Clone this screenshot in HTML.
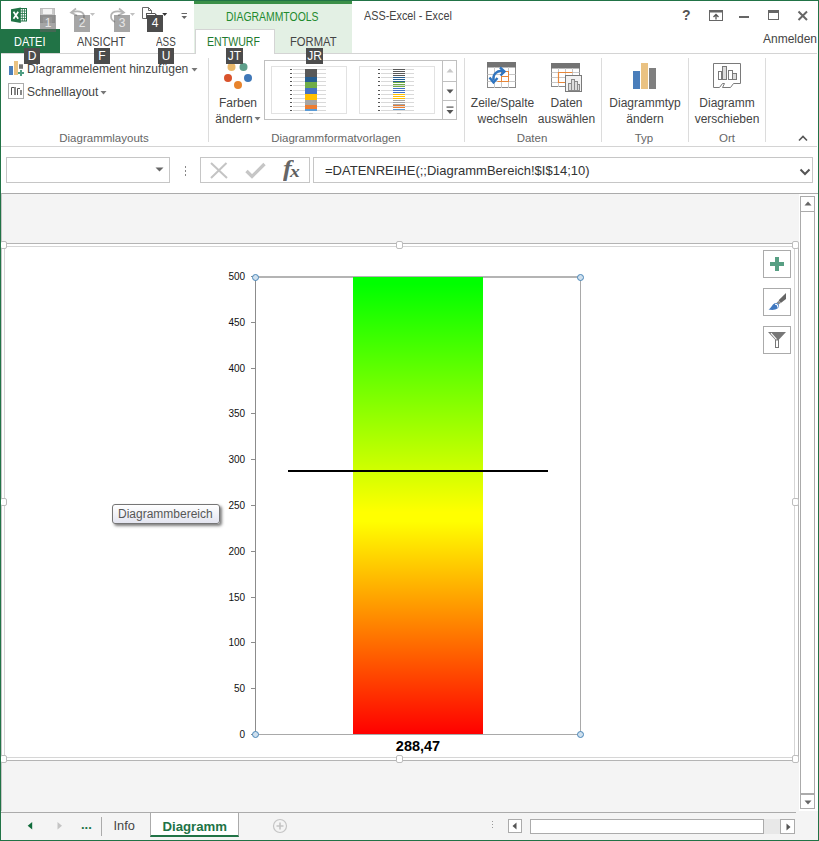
<!DOCTYPE html>
<html><head><meta charset="utf-8">
<style>
*{box-sizing:border-box;margin:0;padding:0}
html,body{width:819px;height:841px;overflow:hidden;background:#fff}
body{font-family:"Liberation Sans",sans-serif;font-size:12px;color:#444;position:relative}
.abs{position:absolute}
.t{position:absolute;white-space:nowrap;line-height:1}
#frame{position:absolute;left:0;top:0;width:819px;height:841px;border:1px solid #217346;pointer-events:none;z-index:50}
/* title */
#ctxband{left:194px;top:1px;width:158px;height:52px;background:#e3f0e4;border-top:3px solid #3b9048}
#datei{left:1px;top:29px;width:59px;height:25px;background:#217346}
#seltab{left:195px;top:29px;width:80px;height:25px;background:#fff;border:1px solid #d4d4d4;border-bottom:none}
#ribline{left:1px;top:53px;width:816px;height:1px;background:#d4d4d4}
#ribbottom{left:1px;top:146px;width:816px;height:1px;background:#d4d4d4}
.kt{position:absolute;background:#4c4c4c;color:#fff;font-size:12px;line-height:16px;height:16px;text-align:center}
.kt.dim{background:rgba(96,96,96,.56);color:#e6e6e6}
.sep{position:absolute;width:1px;background:#dcdcdc;top:58px;height:84px}
.grp{position:absolute;top:133px;font-size:11.500px;color:#666;line-height:1;white-space:nowrap;transform:translateX(-50%)}
.lbl{position:absolute;font-size:12px;color:#444;line-height:16px;text-align:center;white-space:nowrap;transform:translateX(-50%)}
/* sheet */
#sheetbg{left:1px;top:193px;width:817px;height:620px;background:#f4f4f4;border-top:1px solid #ababab;border-left:1px solid #c6c6c6}

.hd{width:7px;height:8px;border:1px solid #bdbdbd;border-radius:2px;background:#fff}
.cir{width:7px;height:7px;border:1px solid #4a86b8;border-radius:50%;background:#cfe0ee}
.cb{width:28px;height:28px;border:1px solid #ababab;background:#fff}
.tk{position:absolute;left:251px;width:4px;height:1px;background:#8c8c8c}
.yl{position:absolute;left:200px;width:45px;text-align:right;font-size:10px;letter-spacing:-0.100px;color:#111;line-height:10px}
.ln{display:inline-block}
</style></head><body>
<div id="frame"></div>

<!-- TITLE BAR -->
<div class="abs" id="ctxband"></div>
<div class="t" style="left:226px;top:11px;font-size:12px;color:#1e8a2e;transform-origin:0 50%;transform:scaleX(0.869)">DIAGRAMMTOOLS</div>
<div class="t" style="left:364px;top:9.500px;font-size:12.500px;color:#444;transform-origin:0 50%;transform:scaleX(0.866)">ASS-Excel - Excel</div>


<!-- QAT -->
<svg class="abs" style="left:10px;top:7px" width="18" height="17" viewBox="0 0 18 17">
 <rect x="9" y="1.500" width="7.500" height="12.500" fill="#fff" stroke="#217346" stroke-width="1"/>
 <path d="M9 4h7.500M9 6.500h7.500M9 9h7.500M9 11.500h7.500M12.300 1.500v12.500M14.500 1.500v12.500" stroke="#217346" stroke-width="0.800" fill="none"/>
 <path d="M1 2.200 L10.800 0.500 V16 L1 14.300 Z" fill="#217346"/>
 <path d="M3.500 4.800 L8.200 11.800 M8.200 4.800 L3.500 11.800" stroke="#fff" stroke-width="1.700" fill="none"/>
</svg>
<svg class="abs" style="left:40px;top:8px" width="16" height="16" viewBox="0 0 16 16">
 <rect x="0.5" y="0.5" width="14" height="14" fill="#c9c9c9" stroke="#bdbdbd"/>
 <rect x="3" y="1" width="9" height="5" fill="#f4f4f4"/>
 <rect x="3" y="9" width="9" height="6" fill="#dedede"/>
</svg>
<svg class="abs" style="left:69px;top:7px" width="27" height="18" viewBox="0 0 27 18">
 <path d="M7 1.500 L2 5.500 L8 8.500" stroke="#b4b4b4" stroke-width="1.700" fill="none"/>
 <path d="M2.500 5.500 C8 3.500 15 4 15 9.500 C15 12.500 13 14 11 15" stroke="#b4b4b4" stroke-width="1.700" fill="none"/>
 <path d="M21 6 h5 l-2.500 3z" fill="#c0c0c0"/>
</svg>
<svg class="abs" style="left:108px;top:7px" width="29" height="18" viewBox="0 0 29 18">
 <path d="M11 1.500 L16 5.500 L10 8.500" stroke="#b4b4b4" stroke-width="1.700" fill="none"/>
 <path d="M15.500 5.500 C10 3.500 3 4 3 9.500 C3 12.500 5 14 7 15" stroke="#b4b4b4" stroke-width="1.700" fill="none"/>
 <path d="M22 6 h5 l-2.500 3z" fill="#c0c0c0"/>
</svg>
<svg class="abs" style="left:141px;top:6px" width="28" height="18" viewBox="0 0 28 18">
 <path d="M1.500 1.500 h6 l3 3 v8 h-9z" fill="#fff" stroke="#6a6a6a" stroke-width="1"/>
 <path d="M7.500 1.500 v3 h3" fill="none" stroke="#6a6a6a" stroke-width="1"/>
 <path d="M5 7 h9 l2 2 h6 v4 h-17z" fill="#555"/>
 <rect x="6" y="8" width="8" height="1" fill="#fff"/>
 <path d="M21.200 7 h5 l-2.500 3z" fill="#333"/>
</svg>
<svg class="abs" style="left:180px;top:12px" width="8" height="8" viewBox="0 0 8 8">
 <rect x="1.500" y="1" width="5.500" height="1" fill="#666"/>
 <path d="M1.500 4 h5.500 l-2.750 3z" fill="#666"/>
</svg>
<!-- window buttons -->
<div class="t" style="left:682px;top:8px;font-size:14px;font-weight:bold;color:#555">?</div>
<svg class="abs" style="left:709px;top:10px" width="14" height="12" viewBox="0 0 14 12">
 <rect x="0.5" y="0.5" width="13" height="10" fill="none" stroke="#666"/>
 <rect x="0.5" y="0.5" width="13" height="2" fill="#666"/>
 <path d="M7 9.500 V5 M4.500 7 L7 4.500 L9.500 7" stroke="#555" stroke-width="1.300" fill="none"/>
</svg>
<div class="abs" style="left:739px;top:16px;width:10px;height:2px;background:#666"></div>
<svg class="abs" style="left:768px;top:10px" width="12" height="11" viewBox="0 0 12 11">
 <rect x="0.5" y="0.5" width="10" height="9" fill="none" stroke="#666"/>
 <rect x="0.5" y="0.5" width="10" height="2.5" fill="#666"/>
</svg>
<svg class="abs" style="left:797px;top:9.500px" width="12" height="12" viewBox="0 0 12 12">
 <path d="M1.5 1.5 L10 10 M10 1.5 L1.5 10" stroke="#666" stroke-width="2" fill="none"/>
</svg>

<!-- TAB ROW -->
<div class="abs" id="datei"></div>
<div class="t" style="left:14px;top:36px;font-size:12px;color:#fff;transform-origin:0 50%;transform:scaleX(0.913)">DATEI</div>
<div class="t" style="left:77px;top:36px;font-size:12px;color:#444;transform-origin:0 50%;transform:scaleX(0.916)">ANSICHT</div>
<div class="t" style="left:156px;top:36px;font-size:12px;color:#444;transform-origin:0 50%;transform:scaleX(0.82)">ASS</div>
<div class="abs" id="ribline"></div>
<div class="abs" id="seltab"></div>
<div class="t" style="left:207px;top:36px;font-size:12px;color:#1e7a2e;transform-origin:0 50%;transform:scaleX(0.883)">ENTWURF</div>
<div class="t" style="left:290px;top:36px;font-size:12px;color:#444;transform-origin:0 50%;transform:scaleX(0.934)">FORMAT</div>
<div class="t" style="left:763px;top:33px;font-size:12px;color:#444">Anmelden</div>

<!-- RIBBON -->
<div class="abs" id="ribbottom"></div>


<!-- group 1 -->
<svg class="abs" style="left:8px;top:60px" width="18" height="18" viewBox="0 0 18 18">
 <rect x="1" y="6" width="4" height="9" fill="#4a7ebb"/>
 <rect x="6" y="1" width="4" height="14" fill="#eac282"/>
 <rect x="11" y="4.300" width="4" height="4.500" fill="#737373"/>
 <path d="M10 13 h6 M13 10 v6" stroke="#4f9e83" stroke-width="2" fill="none"/>
</svg>
<div class="t" style="left:27px;top:63px;font-size:12.100px;color:#444">Diagrammelement hinzufügen</div>
<svg class="abs" style="left:191px;top:68px" width="7" height="4"><path d="M0.5 0 h6 l-3 3.5z" fill="#777"/></svg>
<svg class="abs" style="left:8px;top:83px" width="16" height="16" viewBox="0 0 16 16">
 <rect x="0.500" y="0.500" width="15" height="15" fill="#fff" stroke="#ababab"/>
 <path d="M3.500 12 v-7.500 h2.500" stroke="#555" stroke-width="1" fill="none"/>
 <rect x="6" y="4" width="2" height="8" fill="#8a8a8a"/>
 <path d="M9.500 12 v-6.500 h2.500" stroke="#555" stroke-width="1" fill="none"/>
 <rect x="12" y="7" width="2" height="5" fill="#8a8a8a"/>
</svg>
<div class="t" style="left:27px;top:86px;font-size:12px;color:#444">Schnelllayout</div>
<svg class="abs" style="left:100px;top:91px" width="7" height="4"><path d="M0.5 0 h6 l-3 3.5z" fill="#777"/></svg>
<div class="grp" style="left:104px">Diagrammlayouts</div>
<div class="sep" style="left:208px"></div>

<!-- group 2 -->
<svg class="abs" style="left:223px;top:61px" width="32" height="34" viewBox="0 0 32 34">
 <circle cx="8.500" cy="6" r="4" fill="#eab86a"/>
 <circle cx="20.500" cy="6" r="4" fill="#5f9f8b"/>
 <circle cx="5" cy="17" r="4" fill="#d9532c"/>
 <circle cx="25" cy="17" r="4" fill="#3f78b8"/>
 <circle cx="15" cy="24" r="4" fill="#e8832c"/>
</svg>
<div class="lbl" style="left:238px;top:95px"><span class="ln">Farben</span><br><span class="ln" style="position:relative;left:-4px">ändern</span></div>
<svg class="abs" style="left:254px;top:117px" width="7" height="4"><path d="M0.5 0 h6 l-3 3.5z" fill="#777"/></svg>

<div class="abs" style="left:264px;top:60px;width:193px;height:60px;border:1px solid #c0c0c0;background:#fff"></div>
<div class="abs" style="left:442px;top:60px;width:15px;height:60px;border-left:1px solid #c0c0c0"></div>
<div class="abs" style="left:442px;top:81px;width:15px;height:1px;background:#c0c0c0"></div>
<div class="abs" style="left:442px;top:100px;width:15px;height:1px;background:#c0c0c0"></div>
<svg class="abs" style="left:446px;top:68px" width="8" height="5"><path d="M0.5 4.500 h7 l-3.500 -4z" fill="#c9c9c9"/></svg>
<svg class="abs" style="left:446px;top:89px" width="8" height="5"><path d="M0.5 0.5 h7 l-3.500 4z" fill="#555"/></svg>
<svg class="abs" style="left:446px;top:106px" width="8" height="9"><rect x="0.5" y="0.500" width="7" height="1.200" fill="#555"/><path d="M0.5 4 h7 l-3.500 4z" fill="#555"/></svg>

<!-- thumb 1 -->
<div class="abs" style="left:271px;top:66px;width:76px;height:48px;border:1px solid #e2e2e2;background:#fff"></div>
<svg class="abs" style="left:0;top:0" width="460" height="120" viewBox="0 0 460 120"><g shape-rendering="crispEdges"><rect x="293" y="69" width="33" height="1" fill="#d9d9d9"/><rect x="290" y="69" width="2" height="1" fill="#555"/><rect x="293" y="73" width="33" height="1" fill="#d9d9d9"/><rect x="290" y="73" width="2" height="1" fill="#555"/><rect x="293" y="77" width="33" height="1" fill="#d9d9d9"/><rect x="290" y="77" width="2" height="1" fill="#555"/><rect x="293" y="81" width="33" height="1" fill="#d9d9d9"/><rect x="290" y="81" width="2" height="1" fill="#555"/><rect x="293" y="85" width="33" height="1" fill="#d9d9d9"/><rect x="290" y="85" width="2" height="1" fill="#555"/><rect x="293" y="90" width="33" height="1" fill="#d9d9d9"/><rect x="290" y="90" width="2" height="1" fill="#555"/><rect x="293" y="94" width="33" height="1" fill="#d9d9d9"/><rect x="290" y="94" width="2" height="1" fill="#555"/><rect x="293" y="98" width="33" height="1" fill="#d9d9d9"/><rect x="290" y="98" width="2" height="1" fill="#555"/><rect x="293" y="102" width="33" height="1" fill="#d9d9d9"/><rect x="290" y="102" width="2" height="1" fill="#555"/><rect x="293" y="106" width="33" height="1" fill="#d9d9d9"/><rect x="290" y="106" width="2" height="1" fill="#555"/><rect x="293" y="110" width="33" height="1" fill="#d9d9d9"/><rect x="290" y="110" width="2" height="1" fill="#555"/></g><g shape-rendering="crispEdges"><rect x="305" y="69" width="12" height="8" fill="#595959"/><rect x="305" y="77" width="12" height="5" fill="#255e91"/><rect x="305" y="82" width="12" height="6" fill="#70ad47"/><rect x="305" y="88" width="12" height="6" fill="#4472c4"/><rect x="305" y="94" width="12" height="6" fill="#ffc000"/><rect x="305" y="100" width="12" height="5" fill="#a5a5a5"/><rect x="305" y="105" width="12" height="4" fill="#ed7d31"/><rect x="305" y="109" width="12" height="2" fill="#5b9bd5"/><rect x="309" y="113" width="4" height="1" fill="#bbb"/></g></svg>
<!-- thumb 2 -->
<div class="abs" style="left:359px;top:66px;width:76px;height:48px;border:1px solid #e2e2e2;background:#fff"></div>
<svg class="abs" style="left:0;top:0" width="460" height="120" viewBox="0 0 460 120"><g shape-rendering="crispEdges"><rect x="381" y="69" width="33" height="1" fill="#d9d9d9"/><rect x="378" y="69" width="2" height="1" fill="#555"/><rect x="381" y="73" width="33" height="1" fill="#d9d9d9"/><rect x="378" y="73" width="2" height="1" fill="#555"/><rect x="381" y="77" width="33" height="1" fill="#d9d9d9"/><rect x="378" y="77" width="2" height="1" fill="#555"/><rect x="381" y="81" width="33" height="1" fill="#d9d9d9"/><rect x="378" y="81" width="2" height="1" fill="#555"/><rect x="381" y="85" width="33" height="1" fill="#d9d9d9"/><rect x="378" y="85" width="2" height="1" fill="#555"/><rect x="381" y="90" width="33" height="1" fill="#d9d9d9"/><rect x="378" y="90" width="2" height="1" fill="#555"/><rect x="381" y="94" width="33" height="1" fill="#d9d9d9"/><rect x="378" y="94" width="2" height="1" fill="#555"/><rect x="381" y="98" width="33" height="1" fill="#d9d9d9"/><rect x="378" y="98" width="2" height="1" fill="#555"/><rect x="381" y="102" width="33" height="1" fill="#d9d9d9"/><rect x="378" y="102" width="2" height="1" fill="#555"/><rect x="381" y="106" width="33" height="1" fill="#d9d9d9"/><rect x="378" y="106" width="2" height="1" fill="#555"/><rect x="381" y="110" width="33" height="1" fill="#d9d9d9"/><rect x="378" y="110" width="2" height="1" fill="#555"/></g><g shape-rendering="crispEdges"><rect x="393" y="69" width="12" height="1" fill="#595959"/><rect x="393" y="71" width="12" height="1" fill="#595959"/><rect x="393" y="73" width="12" height="1" fill="#595959"/><rect x="393" y="75" width="12" height="1" fill="#595959"/><rect x="393" y="77" width="12" height="1" fill="#255e91"/><rect x="393" y="79" width="12" height="1" fill="#255e91"/><rect x="393" y="81" width="12" height="1" fill="#255e91"/><rect x="393" y="82" width="12" height="1" fill="#70ad47"/><rect x="393" y="84" width="12" height="1" fill="#70ad47"/><rect x="393" y="86" width="12" height="1" fill="#70ad47"/><rect x="393" y="88" width="12" height="1" fill="#4472c4"/><rect x="393" y="90" width="12" height="1" fill="#4472c4"/><rect x="393" y="92" width="12" height="1" fill="#4472c4"/><rect x="393" y="94" width="12" height="1" fill="#ffc000"/><rect x="393" y="96" width="12" height="1" fill="#ffc000"/><rect x="393" y="98" width="12" height="1" fill="#ffc000"/><rect x="393" y="100" width="12" height="1" fill="#a5a5a5"/><rect x="393" y="102" width="12" height="1" fill="#a5a5a5"/><rect x="393" y="104" width="12" height="1" fill="#a5a5a5"/><rect x="393" y="105" width="12" height="1" fill="#ed7d31"/><rect x="393" y="107" width="12" height="1" fill="#ed7d31"/><rect x="393" y="109" width="12" height="1" fill="#5b9bd5"/><rect x="397" y="113" width="4" height="1" fill="#bbb"/></g></svg>
<div class="grp" style="left:336px">Diagrammformatvorlagen</div>
<div class="sep" style="left:464px"></div>

<!-- group 3 Daten -->
<svg class="abs" style="left:487px;top:62px" width="30" height="27" viewBox="0 0 30 27">
 <rect x="0.5" y="0.5" width="28" height="25" fill="#fff" stroke="#8a8a8a"/>
 <rect x="0.5" y="0.5" width="28" height="4.500" fill="#737373" stroke="#737373"/>
 <path d="M0.500 12.500h28M0.500 19.500h28M7.500 5v21M14.500 5v21M21.500 5v21" stroke="#c8c8c8" stroke-width="1" fill="none"/>
 <rect x="14.500" y="9.500" width="7" height="10" fill="#fff" stroke="#e8873a" stroke-width="1"/>
 <path d="M10.500 19.500 h11 M14.500 14.500h7" stroke="#e8873a" stroke-width="1" fill="none"/>
 <path d="M6.500 18.500 C5.500 12 10.500 7.500 16.500 9.500" stroke="#2f75c0" stroke-width="2.400" fill="none"/>
 <path d="M2.500 15.500 L6.500 20.500 L10.500 16" stroke="#2f75c0" stroke-width="2.400" fill="none"/>
 <path d="M13 5.500 L17.500 9.500 L13.500 13.500" stroke="#2f75c0" stroke-width="2.400" fill="none"/>
</svg>
<div class="lbl" style="left:502.500px;top:95px"><span class="ln">Zeile/Spalte</span><br><span class="ln">wechseln</span></div>
<svg class="abs" style="left:551px;top:63px" width="32" height="30" viewBox="0 0 32 30">
 <rect x="0.5" y="0.5" width="28" height="23" fill="#fff" stroke="#8a8a8a"/>
 <rect x="0.5" y="0.5" width="28" height="4.500" fill="#737373" stroke="#737373"/>
 <path d="M0.500 9.500h28M0.500 14.500h28M0.500 19.500h28M7.500 5v19M14.500 5v19M21.500 5v19" stroke="#c8c8c8" stroke-width="1" fill="none"/>
 <path d="M21.500 9.500 H7.500 V19.500 H14" stroke="#e8873a" stroke-width="1.200" fill="none"/>
 <rect x="14.500" y="12.500" width="16" height="16" fill="#f2f2f2" stroke="#7a7a7a"/>
 <rect x="17.500" y="20.500" width="3" height="7" fill="#ddd" stroke="#8a8a8a"/>
 <rect x="20.500" y="16.500" width="3" height="11" fill="#ddd" stroke="#8a8a8a"/>
 <rect x="23.500" y="18.500" width="3" height="9" fill="#ddd" stroke="#8a8a8a"/>
 <rect x="26.500" y="21.500" width="2" height="6" fill="#ddd" stroke="#8a8a8a"/>
</svg>
<div class="lbl" style="left:566.500px;top:95px"><span class="ln">Daten</span><br><span class="ln">auswählen</span></div>
<div class="grp" style="left:532px">Daten</div>
<div class="sep" style="left:601px"></div>

<!-- group 4 Typ -->
<div class="abs" style="left:633px;top:71px;width:7px;height:18px;background:#4a7ebb"></div>
<div class="abs" style="left:641px;top:63px;width:7px;height:26px;background:#eac282"></div>
<div class="abs" style="left:649px;top:68px;width:7px;height:21px;background:#7f7f7f"></div>
<div class="lbl" style="left:645px;top:95px"><span class="ln">Diagrammtyp</span><br><span class="ln">ändern</span></div>
<div class="grp" style="left:644px">Typ</div>
<div class="sep" style="left:688px"></div>

<!-- group 5 Ort -->
<svg class="abs" style="left:713px;top:62px" width="29" height="27" viewBox="0 0 29 27">
 <path d="M0.500 1.500 h27 v20 h-7 l-3 4 h-8 l2 -4 h-2 l-3 4 h-6z" fill="#fff" stroke="#7a7a7a" stroke-width="1"/>
 <rect x="5.500" y="9.500" width="3" height="8" fill="#fff" stroke="#7a7a7a"/>
 <rect x="9.500" y="4.500" width="4" height="13" fill="#dcdcdc" stroke="#7a7a7a"/>
 <rect x="15.500" y="8.500" width="4" height="9" fill="#fff" stroke="#7a7a7a"/>
 <rect x="19.500" y="11.500" width="4" height="6" fill="#dcdcdc" stroke="#7a7a7a"/>
</svg>
<div class="lbl" style="left:727px;top:95px"><span class="ln">Diagramm</span><br><span class="ln">verschieben</span></div>
<div class="grp" style="left:727px">Ort</div>
<div class="sep" style="left:765px"></div>
<svg class="abs" style="left:798px;top:135px" width="10" height="7" viewBox="0 0 10 7"><path d="M1 5.500 L5 1.500 L9 5.500" stroke="#555" stroke-width="1.600" fill="none"/></svg>


<!-- FORMULA BAR -->
<div class="abs" style="left:6px;top:157px;width:164px;height:26px;border:1px solid #c6c6c6;background:#fff"></div>
<svg class="abs" style="left:155px;top:167px" width="9" height="5"><path d="M0.5 0.500 h8 l-4 4z" fill="#666"/></svg>
<div class="abs" style="left:185px;top:166px;width:1px;height:2px;background:#888;box-shadow:0 4px 0 #888,0 8px 0 #888"></div>
<div class="abs" style="left:200px;top:157px;width:110px;height:26px;border:1px solid #c6c6c6;background:#fff"></div>
<svg class="abs" style="left:210px;top:162px" width="18" height="17" viewBox="0 0 18 17"><path d="M1 1 L17 16 M16.500 1 L1 16" stroke="#c4c4c4" stroke-width="2" fill="none"/></svg>
<svg class="abs" style="left:245px;top:162px" width="21" height="17" viewBox="0 0 21 17"><path d="M1.500 9 L7 14.500 L19.500 2" stroke="#c6c6c6" stroke-width="3.300" fill="none"/></svg>
<div class="t" style="left:283px;top:156px;font-family:'Liberation Serif',serif;font-style:italic;font-weight:bold;font-size:24px;color:#666;transform-origin:0 50%;transform:scaleX(1.100)">f</div>
<div class="t" style="left:290px;top:163px;font-family:'Liberation Serif',serif;font-style:italic;font-weight:bold;font-size:17px;color:#5e5e5e;transform-origin:0 50%;transform:scaleX(1.150)">x</div>
<div class="abs" style="left:313px;top:157px;width:500px;height:26px;border:1px solid #c6c6c6;background:#fff"></div>
<div class="t" style="left:325px;top:164px;font-size:13px;color:#333">=DATENREIHE(;;DiagrammBereich!$I$14;10)</div>
<svg class="abs" style="left:799px;top:168px" width="12" height="8" viewBox="0 0 12 8"><path d="M1.500 1.500 L6 6 L10.500 1.500" stroke="#555" stroke-width="2" fill="none"/></svg>

<!-- SHEET AREA -->
<div class="abs" id="sheetbg"></div>



<!-- V SCROLLBAR -->
<div class="abs" style="left:799px;top:194px;width:19px;height:617px;background:#fff"></div>
<div class="abs" style="left:800px;top:196px;width:15px;height:598px;border:1px solid #ababab;background:#fff"></div>
<div class="abs" style="left:800px;top:196px;width:15px;height:16px;border:1px solid #ababab;background:#fff"></div>
<svg class="abs" style="left:804px;top:201px" width="8" height="5"><path d="M0.500 4.500 h7 l-3.500 -4z" fill="#666"/></svg>
<div class="abs" style="left:800px;top:794px;width:15px;height:15px;border:1px solid #ababab;background:#fff"></div>
<svg class="abs" style="left:804px;top:799.500px" width="8" height="5"><path d="M0.500 0.500 h7 l-3.500 4z" fill="#666"/></svg>

<!-- CHART FRAME -->
<div class="abs" style="left:2px;top:243px;width:797px;height:1px;background:#b4b4b4"></div>
<div class="abs" style="left:2px;top:244px;width:797px;height:516px;background:#fff"></div>
<div class="abs" style="left:4px;top:246px;width:791px;height:512px;border:1px solid #d6d6d6;background:#fff"></div>
<div class="abs" style="left:798px;top:243px;width:1px;height:518px;background:#b4b4b4"></div>
<div class="abs" style="left:2px;top:760px;width:797px;height:1px;background:#b4b4b4"></div>
<div class="abs hd" style="left:396px;top:241px"></div>
<div class="abs hd" style="left:396px;top:755px"></div>
<div class="abs hd" style="left:0px;top:241px"></div>
<div class="abs hd" style="left:792px;top:241px"></div>
<div class="abs hd" style="left:0px;top:755px"></div>
<div class="abs hd" style="left:792px;top:755px"></div>
<div class="abs hd" style="left:0px;top:498px"></div>
<div class="abs hd" style="left:792px;top:498px"></div>

<!-- CHART -->
<div class="abs" style="left:255px;top:276px;width:326px;height:459px;border:1px solid #a9a9a9;border-top:2px solid #b4b4b4"></div>
<div class="abs" style="left:353px;top:277px;width:130px;height:457px;background:linear-gradient(to bottom,#00ff00 0%,#00ff00 1.500%,#ffff00 51.500%,#ffff00 53.500%,#ff0000 100%)"></div>
<div class="tk" style="top:276px"></div><div class="yl" style="top:271.5px">500</div>
<div class="tk" style="top:322px"></div><div class="yl" style="top:317.5px">450</div>
<div class="tk" style="top:368px"></div><div class="yl" style="top:363.5px">400</div>
<div class="tk" style="top:413px"></div><div class="yl" style="top:408.5px">350</div>
<div class="tk" style="top:459px"></div><div class="yl" style="top:454.5px">300</div>
<div class="tk" style="top:505px"></div><div class="yl" style="top:500.5px">250</div>
<div class="tk" style="top:551px"></div><div class="yl" style="top:546.5px">200</div>
<div class="tk" style="top:597px"></div><div class="yl" style="top:592.5px">150</div>
<div class="tk" style="top:642px"></div><div class="yl" style="top:637.5px">100</div>
<div class="tk" style="top:688px"></div><div class="yl" style="top:683.5px">50</div>
<div class="tk" style="top:734px"></div><div class="yl" style="top:729.5px">0</div>
<div class="abs" style="left:255px;top:277px;width:1px;height:459px;background:#8c8c8c"></div>
<div class="abs" style="left:288px;top:470px;width:260px;height:2px;background:#000"></div>

<div class="abs cir" style="left:252px;top:273.500px"></div>
<div class="abs cir" style="left:577px;top:273.500px"></div>
<div class="abs cir" style="left:252px;top:731px"></div>
<div class="abs cir" style="left:577px;top:731px"></div>
<div class="t" style="left:418px;top:739px;font-size:14.500px;font-weight:bold;color:#000;transform:translateX(-50%)">288,47</div>

<!-- tooltip -->
<div class="abs" style="left:112px;top:504px;width:108px;height:20px;border:1px solid #767676;border-radius:3px;background:linear-gradient(#fff,#e4e5f0);box-shadow:2px 2px 3px rgba(0,0,0,.5)"></div>
<div class="t" style="left:118px;top:508px;font-size:12px;color:#575757">Diagrammbereich</div>

<!-- chart buttons -->
<div class="abs cb" style="left:763px;top:250px"></div>
<div class="abs cb" style="left:763px;top:288px"></div>
<div class="abs cb" style="left:763px;top:326px"></div>
<svg class="abs" style="left:770px;top:257px" width="14" height="14"><path d="M7 0v14M0 7h14" stroke="#579f83" stroke-width="4" fill="none"/></svg>
<svg class="abs" style="left:767px;top:292px" width="20" height="20" viewBox="0 0 20 20">
 <path d="M19 1 L19 7 L13.800 11 L11.600 8.200 Z" fill="#666"/>
 <path d="M12.800 9.800 L10.500 11.600" stroke="#8a8a8a" stroke-width="2.800"/>
 <path d="M1.500 17.500 C5 15.500 5 11.500 9 11 C12 11 13 14.500 10.800 16.300 C8 18.500 4 18 1.500 17.500Z" fill="#3f78c0"/>
 <path d="M8 12.300 a2.300 2.300 0 0 1 2.600 3.200" stroke="#fff" stroke-width="1.200" fill="none"/>
</svg>
<svg class="abs" style="left:767px;top:331px" width="20" height="18" viewBox="0 0 20 18">
 <path d="M1 1 h18 l-7 7.500 v8.500 h-4 v-8.500z" fill="#777"/>
 <rect x="9" y="9.500" width="2" height="6.500" fill="#fff"/>
 <path d="M4 2.200 L9.500 8.300" stroke="#fff" stroke-width="1.100" fill="none"/>
</svg>

<!-- BOTTOM BAR -->
<div class="abs" style="left:1px;top:811px;width:817px;height:29px;background:#f4f4f4"></div>
<div class="abs" style="left:1px;top:812px;width:795px;height:1px;background:#ababab"></div>
<svg class="abs" style="left:27px;top:822px" width="6" height="8"><path d="M5.200 0 v7.400 l-4.500 -3.700z" fill="#0f6b3a"/></svg>
<svg class="abs" style="left:56.500px;top:822px" width="6" height="8"><path d="M0.500 0 v7.400 l4.500 -3.700z" fill="#c4c4c4"/></svg>
<div class="t" style="left:81px;top:818px;font-size:13px;font-weight:bold;color:#217346">...</div>
<div class="abs" style="left:101px;top:817px;width:1px;height:19px;background:#ababab"></div>
<div class="t" style="left:113.500px;top:819.500px;font-size:12.800px;color:#444">Info</div>
<div class="abs" style="left:150px;top:813px;width:89px;height:24px;background:#fff;border-left:1px solid #ababab;border-right:1px solid #ababab;border-bottom:2px solid #217346"></div>
<div class="t" style="left:162.500px;top:819.500px;font-size:13.200px;font-weight:bold;color:#217346">Diagramm</div>
<svg class="abs" style="left:272px;top:818px" width="16" height="16" viewBox="0 0 16 16"><circle cx="8" cy="8" r="6.500" fill="none" stroke="#c4c4c4" stroke-width="1.200"/><path d="M8 4.500v7M4.500 8h7" stroke="#c4c4c4" stroke-width="1.600"/></svg>
<div class="abs" style="left:492px;top:821px;width:1px;height:1px;background:#999;box-shadow:0 3px 0 #999,0 6px 0 #999"></div>
<div class="abs" style="left:508px;top:819px;width:14px;height:14px;border:1px solid #ababab;background:#fff"></div>
<svg class="abs" style="left:512px;top:822px" width="5" height="8"><path d="M4.500 0.500 v7 l-4 -3.500z" fill="#555"/></svg>
<div class="abs" style="left:530px;top:819px;width:250px;height:15px;background:#e8e8e8"></div><div class="abs" style="left:530px;top:819px;width:234px;height:15px;border:1px solid #ababab;background:#fff"></div>
<div class="abs" style="left:780px;top:819px;width:15px;height:15px;border:1px solid #ababab;background:#fff"></div>
<svg class="abs" style="left:786px;top:822.500px" width="5" height="8"><path d="M0.500 0.500 v7 l4 -3.500z" fill="#555"/></svg>

<!--KT-->
<div class="kt dim" style="left:40px;top:15px;width:16px;height:17px;line-height:17px">1</div>
<div class="kt dim" style="left:74px;top:15px;width:16px;height:17px;line-height:17px">2</div>
<div class="kt dim" style="left:114px;top:15px;width:16px;height:17px;line-height:17px">3</div>
<div class="kt" style="left:147px;top:15px;width:16px;height:17px;line-height:17px">4</div>

<div class="kt" style="left:24px;top:47.500px;width:16px">D</div>
<div class="kt" style="left:94px;top:47.500px;width:16px">F</div>
<div class="kt" style="left:158px;top:47.500px;width:16px">U</div>
<div class="kt" style="left:226px;top:47.500px;width:17px">JT</div>
<div class="kt" style="left:306px;top:47.500px;width:17px">JR</div>

</body></html>
